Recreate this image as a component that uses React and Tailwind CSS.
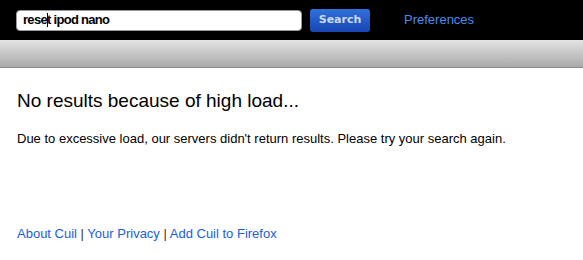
export default function App() {
    return (
        <div className="min-h-[260px] w-full bg-white font-['Liberation_Sans',Arial,sans-serif]">
            {/* top bar with search */}
            <div className="flex h-[40px] items-center bg-black pl-[16px]">
                <div className="flex h-[21px] w-[286px] items-center rounded-[4px] border border-[#999] bg-white pl-[6px] text-[13px] font-bold tracking-[-0.7px] whitespace-pre text-black">
                    rese<span className="mr-[-1px] inline-block h-[14px] w-px bg-black" />t ipod nano
                </div>
                <button className="ml-[8px] h-[23px] w-[60px] rounded-[3px] bg-gradient-to-b from-[#3170dc] to-[#1646b4] font-['DejaVu_Sans',sans-serif] text-[11px] font-bold text-[#cfd9ee]">
                    Search
                </button>
                <span className="ml-[34px] text-[13px] text-[#4a8cf0]">Preferences</span>
            </div>

            {/* gray gradient strip */}
            <div className="h-[28px] border-b border-[#8a8a8a] bg-gradient-to-b from-[#e4e4e4] to-[#a9a9a9]" />

            {/* message */}
            <div className="px-[17px] pt-[21px]">
                <h1 className="text-[19px] leading-[24px] text-black">No results because of high load...</h1>
                <p className="mt-[18px] text-[13px] leading-[16px] text-black">
                    Due to excessive load, our servers didn't return results. Please try your search again.
                </p>
            </div>

            {/* footer links */}
            <div className="mt-[79px] px-[17px] text-[13px] leading-[16px] text-[#1a5ed8]">
                <a href="#" className="text-[#1a5ed8]">About Cuil</a>
                <span className="text-[#333]"> | </span>
                <a href="#" className="text-[#1a5ed8]">Your Privacy</a>
                <span className="text-[#333]"> | </span>
                <a href="#" className="text-[#1a5ed8]">Add Cuil to Firefox</a>
            </div>
        </div>
    );
}
